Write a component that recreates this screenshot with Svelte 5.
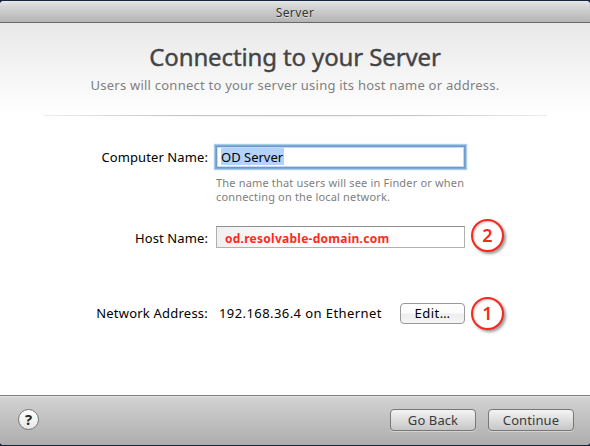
<script>
  let computerName = $state('OD Server');
  let hostName = $state('od.resolvable-domain.com');
</script>

<div class="desktop">
  <div class="window">
    <div class="titlebar"><span>Server</span></div>
    <main>
      <header>
        <h1>Connecting to your Server</h1>
        <p class="sub">Users will connect to your server using its host name or address.</p>
        <div class="rule"></div>
      </header>
      <div class="row computer">
        <div class="label">Computer Name:</div>
        <div class="field focused"><span class="selected">{computerName}</span></div>
      </div>
      <div class="hint">
        <div>The name that users will see in Finder or when</div>
        <div>connecting on the local network.</div>
      </div>
      <div class="row host">
        <div class="label">Host Name:</div>
        <div class="field plain"><span>{hostName}</span></div>
        <div class="marker">2</div>
      </div>
      <div class="row network">
        <div class="label net">Network Address:</div>
        <div class="address"><span>192.168.36.4 on Ethernet</span></div>
        <button class="edit"><span>Edit…</span></button>
        <div class="marker">1</div>
      </div>
    </main>
    <footer>
      <button class="help"><span>?</span></button>
      <button class="nav back"><span>Go Back</span></button>
      <button class="nav cont"><span>Continue</span></button>
    </footer>
  </div>
</div>

<style>
  .desktop {
    width: 590px;
    height: 446px;
    padding: 1px 0;
    box-sizing: border-box;
    background: #14263f;
    font-family: "Lucida Grande", "Noto Sans", sans-serif;
    font-size: 13px;
    color: #000;
    overflow: hidden;
  }
  .window {
    height: 444px;
    display: flex;
    flex-direction: column;
    border-radius: 4px;
    overflow: hidden;
    background: #fff;
  }
  span, h1, p, .label, .hint { white-space: nowrap; }
  .titlebar {
    height: 22px;
    box-sizing: border-box;
    flex: none;
    border-bottom: 1px solid #686868;
    background: linear-gradient(#e8e8e8, #d8d8d8 20%, #b4b4b4);
    text-align: center;
    font-size: 12px;
    letter-spacing: 0.4px;
    line-height: 23px;
    color: #333;
    text-shadow: 0 1px 0 rgba(255, 255, 255, 0.5);
  }
  main { flex: 1; }
  header {
    height: 98px;
    background: linear-gradient(#e8e8e8, #fff 92px);
    text-align: center;
  }
  h1 {
    margin: 0;
    padding-top: 18px;
    font-size: 24px;
    line-height: 32px;
    font-weight: 400;
    letter-spacing: -0.12px;
    -webkit-text-stroke: 0.4px #444;
    color: #444;
  }
  .sub {
    margin: 3px 0 0;
    font-size: 13px;
    line-height: 18px;
    letter-spacing: 0.235px;
    color: #808080;
  }
  .rule {
    height: 4px;
    margin: 21px 43px 0;
    background:
      linear-gradient(90deg, #eee, #c4c4c4 28%, #c4c4c4 72%, #eee) top / 100% 1px no-repeat,
      radial-gradient(ellipse 38% 3px at 50% 0, #e4e4e4, transparent);
  }
  .row { display: flex; align-items: center; }
  .label {
    width: 208px;
    flex: none;
    text-align: right;
    letter-spacing: 0.1px;
  }
  .net { letter-spacing: 0.22px; }
  .computer { height: 23px; padding-top: 24px; }
  .computer .label, .host .label { padding-top: 1px; }
  .field {
    box-sizing: border-box;
    width: 249px;
    height: 22px;
    margin-left: 8px;
    display: flex;
    align-items: center;
    background: #fff;
  }
  .focused {
    border: 1px solid #6f9bcb;
    box-shadow: 0 0 0 1px #7eaadb, 0 0 1px 2px #a9cbee, inset 0 0 0 1px #c5daf0;
    padding-left: 4px;
  }
  .selected {
    height: 17px;
    line-height: 19px;
    padding-right: 1px;
    background: #b3d2fd;
  }
  .hint {
    margin: 8px 0 0 216px;
    font-size: 11px;
    line-height: 14px;
    letter-spacing: 0.17px;
    color: #808080;
  }
  .host { margin-top: 16px; height: 34px; }
  .plain {
    border: 1px solid #b0b0b0;
    border-top-color: #8e8e8e;
    padding: 2px 0 0 8px;
    font-size: 12px;
    font-weight: 700;
    letter-spacing: 0.26px;
    color: #ff2a1c;
    background: linear-gradient(90deg, #f0f0f0, #fff 80px);
  }
  .marker {
    box-sizing: border-box;
    width: 33px;
    height: 33px;
    margin: 0 0 2px 6px;
    border: 2px solid #f62a1c;
    border-radius: 50%;
    box-shadow: 2px 2px 3px rgba(0, 0, 0, 0.4), inset 1px 1px 2px rgba(0, 0, 0, 0.25);
    color: #f62a1c;
    font-size: 18px;
    font-weight: 600;
    line-height: 28px;
    text-align: center;
    background: #fff;
  }
  .host .marker { margin-bottom: 3px; }
  .network { margin-top: 42px; height: 34px; }
  .network .marker { margin-bottom: 0; }
  .address { width: 181px; margin-left: 11px; letter-spacing: 0.42px; }
  button {
    box-sizing: border-box;
    padding: 0;
    font: inherit;
    display: flex;
    align-items: center;
    justify-content: center;
  }
  .edit {
    width: 65px;
    height: 21px;
    border: 1px solid #999;
    border-radius: 4px;
    letter-spacing: 0.5px;
    background: linear-gradient(#fff, #fbfbfb 48%, #ededed 52%, #f5f5f5);
    color: #000;
  }
  footer {
    flex: none;
    height: 50px;
    box-sizing: border-box;
    border-top: 1px solid #808080;
    display: flex;
    align-items: center;
    padding: 0 16px 2px 18px;
    background: linear-gradient(#e6e6e6, #d2d2d2 2px, #adadad);
  }
  .nav {
    width: 86px;
    height: 22px;
    border: 1px solid #777;
    border-radius: 4px;
    background: linear-gradient(#f4f4f4, #c6c6c6);
    box-shadow: 0 1px 0 rgba(255, 255, 255, 0.4);
    color: #3a3a3a;
    margin-left: 12px;
    letter-spacing: 0.1px;
  }
  .back { margin-left: auto; }
  .help {
    width: 21px;
    height: 21px;
    border: 1px solid #777;
    border-radius: 50%;
    background: linear-gradient(#fff, #e8e8e8);
    color: #2a2a2a;
    font-size: 15px;
    line-height: 19px;
    font-weight: 700;
  }
</style>
